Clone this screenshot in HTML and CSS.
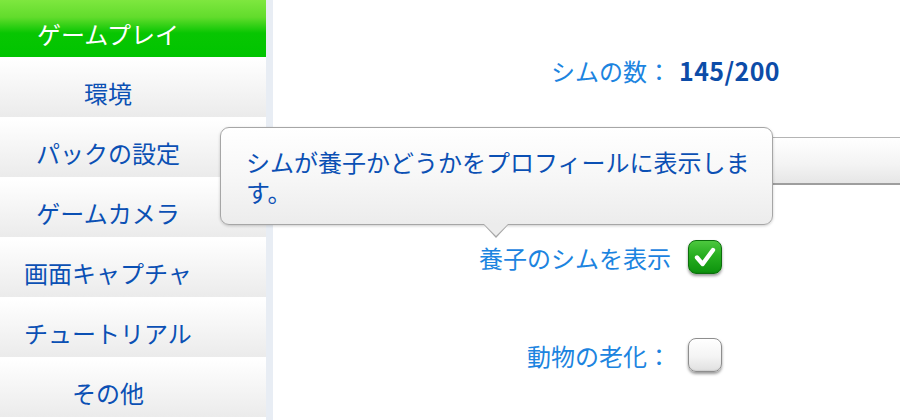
FILE: index.html
```html
<!DOCTYPE html>
<html lang="ja">
<head>
<meta charset="utf-8">
<title>ゲームオプション</title>
<link rel="stylesheet" href="styles.css">
</head>
<body>
<div class="page">
  <nav class="sidebar">
    <div class="nav-item active">ゲームプレイ</div>
    <div class="nav-item">環境</div>
    <div class="nav-item">パックの設定</div>
    <div class="nav-item">ゲームカメラ</div>
    <div class="nav-item">画面キャプチャ</div>
    <div class="nav-item">チュートリアル</div>
    <div class="nav-item">その他</div>
  </nav>
  <div class="strip"></div>
  <main class="main">
    <div class="row stat-row">
      <span class="label">シムの数：</span>
      <span class="value">145/200</span>
    </div>
    <div class="bar"></div>
    <div class="row check-row first">
      <span class="label">養子のシムを表示</span>
      <span class="checkbox checked">
        <svg viewBox="0 0 34 34" width="34" height="34"><path d="M8.5 17.5 L14.5 24.5 L25.5 9.5" fill="none" stroke="#fff" stroke-width="4.6" stroke-linecap="round" stroke-linejoin="round"/></svg>
      </span>
    </div>
    <div class="row check-row second">
      <span class="label">動物の老化：</span>
      <span class="checkbox"></span>
    </div>
    <div class="tooltip">シムが養子かどうかをプロフィールに表示します。</div>
  </main>
</div>
</body>
</html>
```
FILE: styles.css
```css
html, body {
  margin: 0;
  padding: 0;
  background: #ffffff;
  overflow: hidden;
}
body {
  width: 900px;
  height: 420px;
  font-family: "Noto Sans CJK JP", "Noto Sans", sans-serif;
}
.page {
  display: flex;
  width: 900px;
  height: 420px;
}
.sidebar {
  flex: 0 0 266px;
  width: 266px;
  display: flex;
  flex-direction: column;
  gap: 2px;
  background: #ffffff;
}
.nav-item {
  height: 58px;
  flex: 0 0 auto;
  box-sizing: border-box;
  padding: 8px 50px 0 0;
  display: flex;
  align-items: center;
  justify-content: center;
  font-size: 24px;
  color: #0b50b4;
  background: linear-gradient(#ffffff 0%, #f6f6f6 45%, #ebebeb 100%);
  white-space: nowrap;
}
.nav-item.active {
  height: 57px;
  padding-top: 10px;
  color: #ffffff;
  background: linear-gradient(#7ee73f 0%, #62dc2c 30%, #08c602 58%, #00c400 100%);
}
.strip {
  flex: 0 0 7px;
  background: #e8edf4;
}
.main {
  flex: 1 1 auto;
  min-width: 0;
  position: relative;
}
.row {
  display: flex;
  align-items: center;
}
.label {
  flex: 0 0 398px;
  text-align: right;
  font-size: 24px;
  color: #1c84e0;
  white-space: nowrap;
}
.stat-row {
  margin-top: 52px;
  height: 36px;
}
.value {
  margin-left: 8px;
  font-size: 25px;
  font-weight: 700;
  color: #0c4ca8;
  letter-spacing: 0.4px;
}
.bar {
  margin-top: 49px;
  margin-left: 30px;
  height: 48px;
  box-sizing: border-box;
  border: 1px solid #b4b4b4;
  border-bottom: 2px solid #9e9e9e;
  border-right: none;
  border-radius: 4px 0 0 4px;
  background: linear-gradient(#ffffff 0%, #f3f3f3 60%, #e6e6e6 100%);
}
.check-row.first {
  margin-top: 55px;
  height: 34px;
}
.check-row.second {
  margin-top: 64px;
  height: 34px;
}
.checkbox {
  margin-left: 17px;
  flex: 0 0 34px;
  width: 34px;
  height: 34px;
  box-sizing: border-box;
  border-radius: 8px;
  border: 1px solid #8e8e8e;
  background: linear-gradient(#ffffff 0%, #f4f4f4 55%, #e0e0e0 100%);
  box-shadow: 0 2px 3px rgba(0, 0, 0, 0.4), inset 0 -1px 1px rgba(0, 0, 0, 0.08);
  display: flex;
  align-items: center;
  justify-content: center;
}
.checkbox.checked {
  border: 1px solid #0c6e0c;
  background: linear-gradient(#4cc83e 0%, #27ae20 45%, #0d930d 100%);
}
.checkbox svg {
  display: block;
}
.tooltip {
  position: absolute;
  left: -53px;
  top: 127px;
  width: 553px;
  height: 98px;
  box-sizing: border-box;
  padding: 19px 20px 0 25px;
  border: 1px solid #a6a6a6;
  border-radius: 9px;
  background: linear-gradient(#ffffff 0%, #f7f7f7 50%, #ececec 100%);
  box-shadow: 0 1px 3px rgba(0, 0, 0, 0.2);
  font-size: 24px;
  line-height: 30px;
  color: #0b50b4;
}
.tooltip::before,
.tooltip::after {
  content: "";
  position: absolute;
  left: 262px;
  width: 0;
  height: 0;
  border-left: 13px solid transparent;
  border-right: 13px solid transparent;
}
.tooltip::before {
  bottom: -14px;
  border-top: 14px solid #a6a6a6;
}
.tooltip::after {
  bottom: -12px;
  border-top: 13px solid #ececec;
}
```
